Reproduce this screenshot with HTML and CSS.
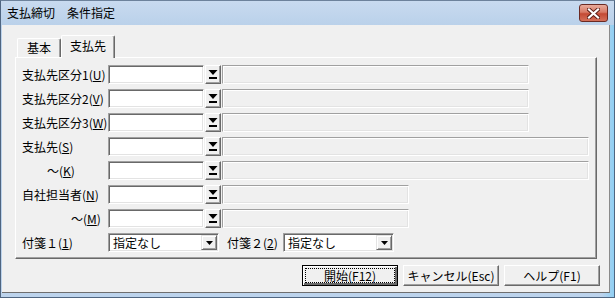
FILE: index.html
```html
<!DOCTYPE html>
<html lang="ja">
<head>
    <meta charset="UTF-8">
    <title>支払締切 条件指定</title>
    <link rel="stylesheet" href="styles.css">
</head>
<body>
    <div class="window">
        <div class="titlebar">
            <span class="title">支払締切　条件指定</span>
            <div class="close">
                <svg width="13" height="11" viewBox="0 0 13 11">
                    <path d="M2 1.5 L11 9.5 M11 1.5 L2 9.5" stroke="#5a1d16" stroke-width="4" stroke-linecap="square"/>
                    <path d="M2 1.5 L11 9.5 M11 1.5 L2 9.5" stroke="#fff" stroke-width="2.2" stroke-linecap="square"/>
                </svg>
            </div>
        </div>
        <div class="frame">
            <div class="client">
                <div class="tabs">
                    <div class="tab">基本</div>
                    <div class="tab active">支払先</div>
                </div>
                <div class="panel">
                    <div class="row">
                        <label class="lbl">支払先区分1(<u>U</u>)</label>
                        <div class="field"></div>
                        <div class="lookup"><svg width="10" height="9" viewBox="0 0 10 9"><path d="M0.5 0 H9.5 L5 5 Z M1 7 H9 V9 H1 Z" fill="#000"/></svg></div>
                        <div class="ro w-short"></div>
                    </div>
                    <div class="row">
                        <label class="lbl">支払先区分2(<u>V</u>)</label>
                        <div class="field"></div>
                        <div class="lookup"><svg width="10" height="9" viewBox="0 0 10 9"><path d="M0.5 0 H9.5 L5 5 Z M1 7 H9 V9 H1 Z" fill="#000"/></svg></div>
                        <div class="ro w-short"></div>
                    </div>
                    <div class="row">
                        <label class="lbl">支払先区分3(<u>W</u>)</label>
                        <div class="field"></div>
                        <div class="lookup"><svg width="10" height="9" viewBox="0 0 10 9"><path d="M0.5 0 H9.5 L5 5 Z M1 7 H9 V9 H1 Z" fill="#000"/></svg></div>
                        <div class="ro w-short"></div>
                    </div>
                    <div class="row">
                        <label class="lbl">支払先(<u>S</u>)</label>
                        <div class="field"></div>
                        <div class="lookup"><svg width="10" height="9" viewBox="0 0 10 9"><path d="M0.5 0 H9.5 L5 5 Z M1 7 H9 V9 H1 Z" fill="#000"/></svg></div>
                        <div class="ro w-long"></div>
                    </div>
                    <div class="row">
                        <label class="lbl to-k">～(<u>K</u>)</label>
                        <div class="field"></div>
                        <div class="lookup"><svg width="10" height="9" viewBox="0 0 10 9"><path d="M0.5 0 H9.5 L5 5 Z M1 7 H9 V9 H1 Z" fill="#000"/></svg></div>
                        <div class="ro w-long"></div>
                    </div>
                    <div class="row">
                        <label class="lbl">自社担当者(<u>N</u>)</label>
                        <div class="field"></div>
                        <div class="lookup"><svg width="10" height="9" viewBox="0 0 10 9"><path d="M0.5 0 H9.5 L5 5 Z M1 7 H9 V9 H1 Z" fill="#000"/></svg></div>
                        <div class="ro w-mid"></div>
                    </div>
                    <div class="row">
                        <label class="lbl to-m">～(<u>M</u>)</label>
                        <div class="field"></div>
                        <div class="lookup"><svg width="10" height="9" viewBox="0 0 10 9"><path d="M0.5 0 H9.5 L5 5 Z M1 7 H9 V9 H1 Z" fill="#000"/></svg></div>
                        <div class="ro w-mid"></div>
                    </div>
                    <div class="row">
                        <label class="lbl">付箋１(<u>1</u>)</label>
                        <div class="combo">
                            <span class="combo-text">指定なし</span>
                            <span class="combo-btn"><svg width="7" height="4" viewBox="0 0 7 4"><path d="M0 0 H7 L3.5 4 Z" fill="#000"/></svg></span>
                        </div>
                        <label class="lbl2">付箋２(<u>2</u>)</label>
                        <div class="combo">
                            <span class="combo-text">指定なし</span>
                            <span class="combo-btn"><svg width="7" height="4" viewBox="0 0 7 4"><path d="M0 0 H7 L3.5 4 Z" fill="#000"/></svg></span>
                        </div>
                    </div>
                </div>
                <div class="actions">
                    <div class="btn default"><span class="focus">開始(F12)</span></div>
                    <div class="btn">キャンセル(Esc)</div>
                    <div class="btn">ヘルプ(F1)</div>
                </div>
            </div>
        </div>
    </div>
</body>
</html>
```

FILE: styles.css
```css
body {
    margin: 0;
    font-family: "Noto Sans CJK JP", "Noto Sans", sans-serif;
    font-size: 12px;
    color: #000;
    background: #fff;
}
.window {
    width: 615px;
    height: 298px;
    box-sizing: border-box;
    border: 1px solid #4f6580;
    border-top-color: #6d829b;
    background: #bcd3ec;
    display: flex;
    flex-direction: column;
}
.titlebar {
    height: 24px;
    flex: none;
    display: flex;
    justify-content: space-between;
    align-items: flex-start;
    background: linear-gradient(#c8daef, #bad1ea);
}
.title {
    padding-left: 6px;
    line-height: 24px;
}
.close {
    width: 27px;
    height: 16px;
    margin: 3px 6px 0 0;
    border: 1px solid #6b2a23;
    border-radius: 3px;
    background: linear-gradient(#e8ab9c 0%, #d87a66 45%, #c44a34 55%, #d4705a 100%);
    display: flex;
    align-items: center;
    justify-content: center;
}
.frame {
    flex: 1;
    display: flex;
    padding: 0 4px 4px 1px;
    background: linear-gradient(90deg, #bcd3ec, #bcd3ec 98%, #8fcff3);
}
.client {
    flex: 1;
    background: #f0f0f0;
    border-right: 1px solid #8a8a8a;
    border-bottom: 1px solid #6e6e6e;
    padding: 10px 0 0 13px;
}
/* tabs */
.tabs {
    display: flex;
    align-items: flex-end;
    height: 22px;
    padding-left: 2px;
}
.tab {
    box-sizing: border-box;
    height: 19px;
    width: 44px;
    line-height: 18px;
    text-align: center;
    border-top: 1px solid #fff;
    border-left: 1px solid #fff;
    border-right: 1px solid #696969;
    box-shadow: inset -1px 0 #a0a0a0;
    border-radius: 2px 2px 0 0;
    background: #f0f0f0;
}
.tab.active {
    height: 23px;
    width: 54px;
    margin-bottom: -1px;
    line-height: 20px;
    position: relative;
    z-index: 1;
}
.panel {
    box-sizing: border-box;
    width: 582px;
    height: 202px;
    border-top: 1px solid #fff;
    border-left: 1px solid #fff;
    border-right: 1px solid #696969;
    border-bottom: 1px solid #696969;
    box-shadow: inset -1px -1px #a0a0a0;
    padding: 7px 0 0 6px;
    display: flex;
    flex-direction: column;
    gap: 5px;
}
.row {
    display: flex;
    align-items: center;
    height: 19px;
}
.lbl {
    width: 86px;
    flex: none;
    box-sizing: border-box;
    white-space: nowrap;
}
.lbl.to-k {
    padding-left: 25px;
}
.lbl.to-m {
    padding-left: 49px;
}
.lbl2 {
    width: 56px;
    margin-left: 8px;
    white-space: nowrap;
}
.field {
    width: 96px;
    height: 19px;
    box-sizing: border-box;
    background: #fff;
    border-top: 1px solid #a0a0a0;
    border-left: 1px solid #a0a0a0;
    border-right: 1px solid #fff;
    border-bottom: 1px solid #fff;
    box-shadow: inset 1px 1px #696969, inset -1px -1px #e3e3e3;
}
.lookup {
    width: 16px;
    height: 19px;
    margin-left: 1px;
    box-sizing: border-box;
    background: #f0f0f0;
    border-top: 1px solid #fff;
    border-left: 1px solid #fff;
    border-right: 1px solid #696969;
    border-bottom: 1px solid #696969;
    box-shadow: inset -1px -1px #a0a0a0;
    display: flex;
    justify-content: center;
    padding-top: 4px;
}
.ro {
    height: 19px;
    margin-left: 1px;
    box-sizing: border-box;
    border-top: 1px solid #a0a0a0;
    border-left: 1px solid #a0a0a0;
    border-right: 1px solid #fff;
    border-bottom: 1px solid #fff;
    box-shadow: inset 1px 1px #fff, inset -1px -1px #e3e3e3;
}
.w-short { width: 307px; }
.w-long { width: 367px; }
.w-mid { width: 187px; }
/* combo */
.combo {
    width: 111px;
    height: 19px;
    box-sizing: border-box;
    background: #fff;
    border-top: 1px solid #a0a0a0;
    border-left: 1px solid #a0a0a0;
    border-right: 1px solid #fff;
    border-bottom: 1px solid #fff;
    box-shadow: inset 1px 1px #696969, inset -1px -1px #e3e3e3;
    display: flex;
    padding: 1px;
}
.combo-text {
    flex: 1;
    padding-left: 3px;
    line-height: 16px;
}
.combo-btn {
    width: 16px;
    box-sizing: border-box;
    background: #f0f0f0;
    border-top: 1px solid #e3e3e3;
    border-left: 1px solid #e3e3e3;
    border-right: 1px solid #696969;
    border-bottom: 1px solid #696969;
    box-shadow: inset 1px 1px #fff, inset -1px -1px #a0a0a0;
    display: flex;
    align-items: center;
    justify-content: center;
}
/* bottom buttons */
.actions {
    display: flex;
    gap: 5px;
    margin-top: 6px;
    padding-left: 287px;
}
.btn {
    width: 96px;
    height: 21px;
    box-sizing: border-box;
    background: #f0f0f0;
    border-top: 1px solid #fff;
    border-left: 1px solid #fff;
    border-right: 1px solid #696969;
    border-bottom: 1px solid #696969;
    box-shadow: inset -1px -1px #a0a0a0;
    display: flex;
    align-items: center;
    justify-content: center;
}
.btn.default {
    border: 1px solid #000;
    box-shadow: inset 1px 1px #fff, inset -2px -2px #696969;
    padding: 2px;
}
.focus {
    flex: 1;
    align-self: stretch;
    border: 1px dotted #000;
    text-align: center;
    line-height: 13px;
}
```
